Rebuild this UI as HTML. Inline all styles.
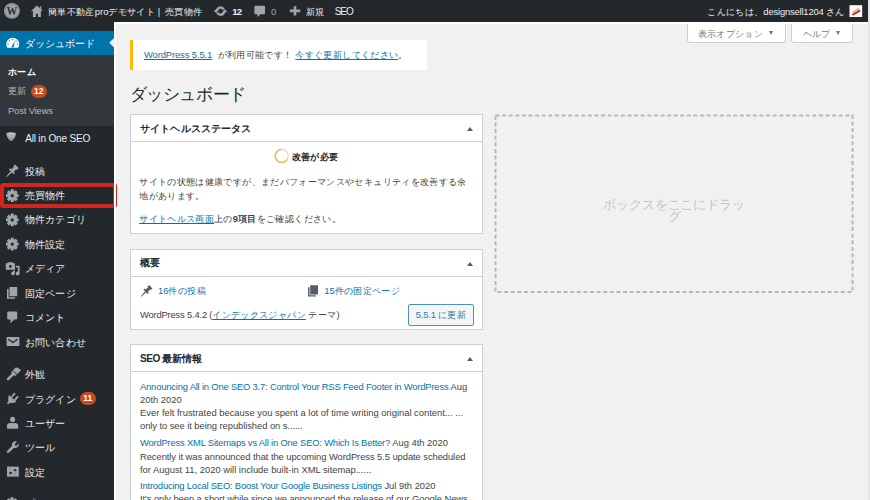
<!DOCTYPE html>
<html><head><meta charset="utf-8">
<style>
*{box-sizing:border-box;}
html,body{margin:0;padding:0;}
body{width:870px;height:500px;overflow:hidden;position:relative;background:#f1f1f1;font-family:"Liberation Sans",sans-serif;color:#444;}
.a{position:absolute;}
svg.a{overflow:visible;}
.t{position:absolute;white-space:nowrap;line-height:14px;height:14px;}
.j{font-size:calc(var(--em) / 0.75);line-height:0;}
.tofu .j{-webkit-text-stroke:0.4px currentColor;}
.tofu b .j,.tofu .bd .j{-webkit-text-stroke:0.9px currentColor;}
.lnk{color:#0073aa;}
.u{text-decoration:underline;}
.nl{letter-spacing:-0.18px;}
.box{position:absolute;background:#fff;border:1px solid #ccd0d4;}
.hd{position:absolute;left:0;right:0;top:0;height:27px;border-bottom:1px solid #ccd0d4;}
.tri{position:absolute;width:0;height:0;border-left:3px solid transparent;border-right:3px solid transparent;border-bottom:4px solid #555d66;}
.sbtn{position:absolute;top:22px;height:21px;background:#fff;border:1px solid #ccd0d4;border-top:none;border-radius:0 0 3px 3px;}
.dn{position:absolute;width:0;height:0;border-left:2.7px solid transparent;border-right:2.7px solid transparent;border-top:4.5px solid #72777c;}
.badge{position:absolute;height:12.5px;border-radius:6.5px;background:#ca4a1f;color:#fff;font-size:8.4px;font-weight:bold;line-height:12.5px;text-align:center;}
</style></head><body>

<div class="a" style="left:0;top:0;width:868px;height:22px;background:#23282d;"></div>
<div class="a" style="left:868px;top:0;width:2px;height:500px;background:#e6e6e6;"></div>
<div class="sbtn" style="left:686.5px;width:99.5px;"></div>
<div class="dn" style="left:768.5px;top:30.8px;"></div>
<div class="sbtn" style="left:790.8px;width:62.6px;"></div>
<div class="dn" style="left:835.8px;top:30.8px;"></div>
<div class="a" style="left:0;top:22px;width:114px;height:478px;background:#23282d;"></div>
<div class="a" style="left:0;top:31px;width:114px;height:24px;background:#0073aa;"></div>
<div class="a" style="left:0;top:55px;width:114px;height:71px;background:#32373c;"></div>
<div class="a" style="left:0;top:183px;width:117px;height:25.3px;border:4px solid #d0271d;border-radius:3px;"></div>
<div class="badge" style="left:31px;top:85px;width:15.5px;">12</div>
<div class="badge" style="left:79.5px;top:392px;width:16.5px;">11</div>
<div class="a" style="left:114px;top:22px;width:1.5px;height:478px;background:#fff;"></div>
<div class="a" style="left:114px;top:22px;width:754px;height:1.5px;background:#fff;"></div>
<svg class="a" style="left:109px;top:37.3px" width="6" height="11.4" viewBox="0 0 6 11.4"><path d="M6 0 L0.2 5.7 L6 11.4z" fill="#f1f1f1"/></svg>

<div class="a" style="left:130px;top:40.3px;width:297px;height:29.4px;background:#fff;border-left:3px solid #ffb900;"></div>

<div class="box" style="left:130px;top:114.3px;width:353px;height:120.2px;"><div class="hd" style="height:26.5px;"></div></div>
<div class="tri" style="left:466.5px;top:126.6px;"></div>
<svg class="a" style="left:0;top:0" width="1" height="1" viewBox="0 0 1 1"><circle cx="281.75" cy="155.8" r="6.5" fill="none" stroke="#dcdcde" stroke-width="1.3"/><path d="M281.75 149.3 A6.5 6.5 0 1 0 287.38 159.05" fill="none" stroke="#f0b849" stroke-width="1.3"/></svg>

<div class="box" style="left:130px;top:249.3px;width:353px;height:81px;"><div class="hd" style="height:26.5px;"></div></div>
<div class="tri" style="left:466.5px;top:261.6px;"></div>
<svg class="a" style="left:0;top:0" width="1" height="1" viewBox="0 0 1 1"><path fill="#555d66" d="M149.10 285.09 L152.41 288.40 L150.75 290.05 L147.45 286.75Z M148.02 287.32 L150.18 289.48 L147.89 291.77 L145.73 289.61Z M144.65 288.53 L148.97 292.85 L147.83 294.00 L143.50 289.67Z M145.15 291.33 L146.17 292.35 L141.30 296.64 L140.86 296.20Z"/><path fill="#555d66" d="M310.2 285.3 H318 V294.4 H310.2Z M308 287.2 H309.5 V295.2 H315.8 V296.4 H308Z"/></svg>
<div class="a" style="left:408px;top:304.3px;width:65.6px;height:21.4px;background:#f3f5f6;border:1px solid #4a94c0;border-radius:2px;"></div>

<div class="box" style="left:130px;top:344.3px;width:353px;height:170px;"><div class="hd" style="height:26.5px;"></div></div>
<div class="tri" style="left:466.5px;top:356.6px;"></div>

<svg class="a" style="left:0;top:0" width="1" height="1" viewBox="0 0 1 1"><rect x="495.5" y="115.5" width="357" height="176.5" fill="none" stroke="#b4b9be" stroke-width="2" stroke-dasharray="4 2.6"/></svg>

<svg class="a" style="left:0;top:0" width="870" height="22" viewBox="0 0 870 22"><circle cx="11.9" cy="10.9" r="7.9" fill="#9ea3a8"/><circle cx="11.9" cy="10.9" r="6.9" fill="none" stroke="#6f7479" stroke-width="0.45"/><text transform="translate(11.8,15.1) scale(0.9,1)" text-anchor="middle" font-family="Liberation Serif" font-weight="bold" font-size="12" fill="#2a2f34">W</text><path fill="#a0a5aa" d="M36.9 5.5 L39.8 8.2 V6.6 H41.3 V9.6 L42.6 10.9 L41.9 11.6 L40.9 10.7 V17 H37.9 V13.7 H35.9 V17 H32.9 V10.7 L31.9 11.6 L31.2 10.9Z"/><path fill="none" stroke="#a0a5aa" stroke-width="2.5" d="M217.00 10.55 A3.5 3.5 0 0 1 223.60 9.55 M224.00 11.75 A3.5 3.5 0 0 1 217.40 12.75"/><path fill="#a0a5aa" d="M213.6 10.0 H218.6 L216.1 13.2Z M222.4 12.3 H227.4 L224.9 9.1Z"/><path fill="#a0a5aa" d="M255.2 5.7 H264.2 Q265 5.7 265 6.5 V13.4 Q265 14.2 264.2 14.2 H260.4 L257.4 17.2 V14.2 H255.2 Q254.4 14.2 254.4 13.4 V6.5 Q254.4 5.7 255.2 5.7Z"/><path fill="#a0a5aa" d="M293.7 6.3 H296.3 V9.6 H300.2 V12.2 H296.3 V15.5 H293.7 V12.2 H289.8 V9.6 H293.7Z"/><rect x="849.5" y="5.2" width="12.7" height="11.8" fill="#fff"/><path fill="#c1185a" d="M851.6 14.6 L859.9 9.6 L860.3 11.6 L853.2 15.6Z"/><path fill="#efb23c" d="M852.6 12.2 L857.8 8.0 L859.9 9.6 L851.6 14.6Z"/></svg>

<svg class="a" style="left:0;top:0" width="114" height="500" viewBox="0 0 114 500"><path fill="#fff" d="M7.40 47.8 A6.45 6.45 0 1 1 18.10 47.8Z"/><circle cx="8.05" cy="44.20" r="0.65" fill="#0073aa"/><circle cx="9.43" cy="40.88" r="0.65" fill="#0073aa"/><circle cx="12.75" cy="39.50" r="0.65" fill="#0073aa"/><circle cx="16.07" cy="40.88" r="0.65" fill="#0073aa"/><circle cx="17.45" cy="44.20" r="0.65" fill="#0073aa"/><path fill="#0073aa" d="M11.85 46.60 L14.95 40.60 L13.65 46.60Z"/><circle cx="12.75" cy="46.6" r="1" fill="#0073aa"/><defs><linearGradient id="sg" x1="0" y1="0" x2="0" y2="1"><stop offset="0" stop-color="#c4c7ca"/><stop offset="1" stop-color="#8a8f94"/></linearGradient></defs><path fill="url(#sg)" d="M6.5 133.1 Q11.15 131.3 15.8 133.1 Q15.7 138.7 11.15 141.3 Q6.6 138.7 6.5 133.1Z"/><path fill="#a0a5aa" d="M15.09 164.40 L18.76 168.07 L16.93 169.91 L13.25 166.23Z M13.88 166.87 L16.29 169.28 L13.74 171.82 L11.34 169.42Z M10.14 168.21 L14.95 173.02 L13.67 174.30 L8.86 169.49Z M10.70 171.33 L11.83 172.46 L6.42 177.23 L5.93 176.74Z"/><path fill="#a0a5aa" fill-rule="evenodd" d="M16.70 194.04 L18.64 194.28 L18.64 197.12 L16.70 197.36 L16.58 197.64 L17.79 199.18 L15.78 201.19 L14.24 199.98 L13.96 200.10 L13.72 202.04 L10.88 202.04 L10.64 200.10 L10.36 199.98 L8.82 201.19 L6.81 199.18 L8.02 197.64 L7.90 197.36 L5.96 197.12 L5.96 194.28 L7.90 194.04 L8.02 193.76 L6.81 192.22 L8.82 190.21 L10.36 191.42 L10.64 191.30 L10.88 189.36 L13.72 189.36 L13.96 191.30 L14.24 191.42 L15.78 190.21 L17.79 192.22 L16.58 193.76Z M13.90 195.7 a1.6 1.6 0 1 0 -3.2 0 a1.6 1.6 0 1 0 3.2 0Z"/><path fill="#a0a5aa" fill-rule="evenodd" d="M16.70 218.29 L18.64 218.53 L18.64 221.37 L16.70 221.61 L16.58 221.89 L17.79 223.43 L15.78 225.44 L14.24 224.23 L13.96 224.35 L13.72 226.29 L10.88 226.29 L10.64 224.35 L10.36 224.23 L8.82 225.44 L6.81 223.43 L8.02 221.89 L7.90 221.61 L5.96 221.37 L5.96 218.53 L7.90 218.29 L8.02 218.01 L6.81 216.47 L8.82 214.46 L10.36 215.67 L10.64 215.55 L10.88 213.61 L13.72 213.61 L13.96 215.55 L14.24 215.67 L15.78 214.46 L17.79 216.47 L16.58 218.01Z M13.90 219.95 a1.6 1.6 0 1 0 -3.2 0 a1.6 1.6 0 1 0 3.2 0Z"/><path fill="#a0a5aa" fill-rule="evenodd" d="M16.70 242.49 L18.64 242.73 L18.64 245.57 L16.70 245.81 L16.58 246.09 L17.79 247.63 L15.78 249.64 L14.24 248.43 L13.96 248.55 L13.72 250.49 L10.88 250.49 L10.64 248.55 L10.36 248.43 L8.82 249.64 L6.81 247.63 L8.02 246.09 L7.90 245.81 L5.96 245.57 L5.96 242.73 L7.90 242.49 L8.02 242.21 L6.81 240.67 L8.82 238.66 L10.36 239.87 L10.64 239.75 L10.88 237.81 L13.72 237.81 L13.96 239.75 L14.24 239.87 L15.78 238.66 L17.79 240.67 L16.58 242.21Z M13.90 244.15 a1.6 1.6 0 1 0 -3.2 0 a1.6 1.6 0 1 0 3.2 0Z"/><path fill="#a0a5aa" fill-rule="evenodd" d="M5.8 263.3 H7.5 L8.1 262.2 H12.7 L13.3 263.3 H15 V269.8 H5.8Z M11.8 266.4 a1.4 1.4 0 1 0 -2.8 0 a1.4 1.4 0 1 0 2.8 0Z"/><path fill="#a0a5aa" d="M15.8 265.8 H19.6 V273.4 A1.9 1.9 0 1 1 17.9 271.6 V267.6 H15.8Z"/><path fill="#a0a5aa" d="M14.9 270.6 V273.3 A1.9 1.9 0 1 1 13.1 271.5 V270.6Z"/><path fill="#a0a5aa" d="M9.4 287 H17.2 V296.2 H9.4Z M7 289 H8.6 V297.2 H15 V298.8 H7Z"/><path fill="#a0a5aa" d="M8 311.6 H16.4 Q17.2 311.6 17.2 312.4 V318.6 Q17.2 319.4 16.4 319.4 H14.4 L10.2 323.2 L10.7 319.4 H8 Q7.2 319.4 7.2 318.6 V312.4 Q7.2 311.6 8 311.6Z"/><path fill="#a0a5aa" d="M7.2 337 H18.8 Q19.4 337 19.4 337.6 V345.4 Q19.4 346 18.8 346 H7.2 Q6.6 346 6.6 345.4 V337.6 Q6.6 337 7.2 337Z"/><path fill="none" stroke="#23282d" stroke-width="1.2" d="M8.2 339.2 L12.9 342.6 L17.6 339.2"/><path fill="#a0a5aa" d="M15.72 367.38 L17.92 367.87 L21.10 370.20 L17.00 374.31 L12.89 370.20Z M12.47 370.63 L16.57 374.73 L15.30 376.00 L11.20 371.90Z M12.12 372.82 L14.38 375.08 L13.39 376.07 L11.13 373.81Z"/><path stroke="#a0a5aa" stroke-width="2.6" stroke-linecap="round" d="M12.40 374.80 L8.02 379.18"/><path fill="#a0a5aa" d="M8.9 395.0 L16.6 401.8 Q13.4 403.6 9.8 402.8 L8.1 404.4 L6.9 403.2 L8.4 401.5 Q7.7 398.2 8.9 395.0Z"/><path stroke="#a0a5aa" stroke-width="1.9" stroke-linecap="round" d="M12.1 396.4 L14.5 393.8 M15.3 399.5 L17.6 396.9"/><ellipse cx="12.6" cy="419.4" rx="2.5" ry="2.7" fill="#a0a5aa"/><path fill="#a0a5aa" d="M7 428.8 V425.8 Q7 423 10.2 423 H15 Q18.2 423 18.2 425.8 V428.8Z"/><path fill="#a0a5aa" d="M18.8 443.6 L16.6 445.8 L15.0 445.6 L14.8 444.0 L17.0 441.8 Q14.6 440.6 12.8 442.4 Q11.4 443.9 12.0 445.9 L7.0 450.9 Q6.2 452.0 7.1 452.8 Q8.0 453.6 9.0 452.8 L14.0 447.8 Q16.0 448.5 17.6 447.1 Q19.4 445.4 18.8 443.6Z"/><circle cx="8.1" cy="451.8" r="0.55" fill="#23282d"/><rect x="7" y="466.6" width="11.8" height="10" fill="#a0a5aa"/><path stroke="#868b90" stroke-width="0.9" d="M10.6 468.2 V475.2 M15 468.2 V475.2"/><ellipse cx="10.6" cy="473" rx="1.5" ry="0.9" fill="#23282d"/><ellipse cx="15" cy="470.2" rx="1.5" ry="0.9" fill="#23282d"/><path fill="#a0a5aa" fill-rule="evenodd" d="M16.31 501.88 L18.15 502.13 L18.15 504.87 L16.31 505.12 L16.19 505.40 L17.32 506.88 L15.38 508.82 L13.90 507.69 L13.62 507.81 L13.37 509.65 L10.63 509.65 L10.38 507.81 L10.10 507.69 L8.62 508.82 L6.68 506.88 L7.81 505.40 L7.69 505.12 L5.85 504.87 L5.85 502.13 L7.69 501.88 L7.81 501.60 L6.68 500.12 L8.62 498.18 L10.10 499.31 L10.38 499.19 L10.63 497.35 L13.37 497.35 L13.62 499.19 L13.90 499.31 L15.38 498.18 L17.32 500.12 L16.19 501.60Z M13.60 503.5 a1.6 1.6 0 1 0 -3.2 0 a1.6 1.6 0 1 0 3.2 0Z"/></svg>

<div class="t" style="left:48.00px;top:4.74px;font-size:9.4px;--em:9.36px;color:#eee;"><span class="j">簡単不動産</span>pro<span class="j">デモサイト</span> | </div>
<div class="t" style="left:165.00px;top:4.74px;font-size:9.4px;--em:9.36px;color:#eee;"><span class="j">売買物件</span></div>
<div class="t bd" style="left:232.30px;top:4.67px;font-size:9.6px;--em:9.36px;color:#eee;font-weight:bold;letter-spacing:-0.8px;">12</div>
<div class="t" style="left:271.00px;top:4.67px;font-size:9.6px;--em:9.36px;color:#a0a5aa;">0</div>
<div class="t" style="left:305.50px;top:4.74px;font-size:9.4px;--em:9.36px;color:#eee;"><span class="j">新規</span></div>
<div class="t" style="left:334.80px;top:4.53px;font-size:10.0px;--em:9.36px;color:#eee;letter-spacing:-1.1px;">SEO</div>
<div class="t" style="left:707.20px;top:4.74px;font-size:9.4px;--em:9.36px;color:#eee;letter-spacing:-0.17px;"><span class="j">こんにちは、</span>designsell1204 <span class="j">さん</span></div>
<div class="t" style="left:697.50px;top:26.74px;font-size:9.4px;--em:9.36px;color:#72777c;"><span class="j">表示オプション</span></div>
<div class="t" style="left:802.70px;top:26.74px;font-size:9.4px;--em:9.36px;color:#72777c;"><span class="j">ヘルプ</span></div>
<div class="t" style="left:25.00px;top:36.50px;font-size:10.1px;--em:10.08px;color:#fff;"><span class="j">ダッシュボード</span></div>
<div class="t bd" style="left:8.00px;top:64.74px;font-size:9.4px;--em:9.36px;color:#fff;font-weight:bold;"><span class="j">ホーム</span></div>
<div class="t" style="left:8.00px;top:84.24px;font-size:9.4px;--em:9.36px;color:#b4b9be;"><span class="j">更新</span></div>
<div class="t" style="left:8.00px;top:103.94px;font-size:9.4px;--em:9.36px;color:#b4b9be;letter-spacing:-0.13px;">Post Views</div>
<div class="t" style="left:25.20px;top:131.80px;font-size:10.1px;--em:10.08px;color:#eee;letter-spacing:-0.21px;">All in One SEO</div>
<div class="t" style="left:25.20px;top:164.50px;font-size:10.1px;--em:10.08px;color:#eee;"><span class="j">投稿</span></div>
<div class="t" style="left:25.20px;top:188.90px;font-size:10.1px;--em:10.08px;color:#eee;"><span class="j">売買物件</span></div>
<div class="t" style="left:25.20px;top:213.30px;font-size:10.1px;--em:10.08px;color:#eee;"><span class="j">物件カテゴリ</span></div>
<div class="t" style="left:25.20px;top:237.70px;font-size:10.1px;--em:10.08px;color:#eee;"><span class="j">物件設定</span></div>
<div class="t" style="left:25.20px;top:262.10px;font-size:10.1px;--em:10.08px;color:#eee;"><span class="j">メディア</span></div>
<div class="t" style="left:25.20px;top:286.60px;font-size:10.1px;--em:10.08px;color:#eee;"><span class="j">固定ページ</span></div>
<div class="t" style="left:25.20px;top:311.00px;font-size:10.1px;--em:10.08px;color:#eee;"><span class="j">コメント</span></div>
<div class="t" style="left:25.20px;top:335.50px;font-size:10.1px;--em:10.08px;color:#eee;"><span class="j">お問い合わせ</span></div>
<div class="t" style="left:25.20px;top:368.10px;font-size:10.1px;--em:10.08px;color:#eee;"><span class="j">外観</span></div>
<div class="t" style="left:25.20px;top:392.50px;font-size:10.1px;--em:10.08px;color:#eee;"><span class="j">プラグイン</span></div>
<div class="t" style="left:25.20px;top:416.90px;font-size:10.1px;--em:10.08px;color:#eee;"><span class="j">ユーザー</span></div>
<div class="t" style="left:25.20px;top:441.30px;font-size:10.1px;--em:10.08px;color:#eee;"><span class="j">ツール</span></div>
<div class="t" style="left:25.20px;top:465.70px;font-size:10.1px;--em:10.08px;color:#eee;"><span class="j">設定</span></div>
<div class="t" style="left:25.20px;top:497.00px;font-size:10.1px;--em:10.08px;color:#eee;"><span class="j">プロフィール</span></div>
<div class="t" style="left:144.00px;top:48.24px;font-size:9.4px;--em:9.36px;letter-spacing:-0.1px;"><span class="lnk u">WordPress 5.5.1</span></div>
<div class="t" style="left:217.60px;top:48.24px;font-size:9.4px;--em:9.36px;"><span class="j">が利用可能です！</span></div>
<div class="t" style="left:295.40px;top:48.24px;font-size:9.4px;--em:9.36px;"><span class="lnk u"><span class="j">今すぐ更新してください</span></span><span class="j">。</span></div>
<div class="t" style="left:129.80px;top:88.24px;font-size:16.6px;--em:16.56px;color:#23282d;"><span class="j">ダッシュボード</span></div>
<div class="t bd" style="left:140.20px;top:121.50px;font-size:10.1px;--em:10.08px;color:#23282d;font-weight:bold;"><span class="j">サイトヘルスステータス</span></div>
<div class="t bd" style="left:291.60px;top:149.74px;font-size:9.4px;--em:9.36px;color:#23282d;font-weight:bold;"><span class="j">改善が必要</span></div>
<div class="t" style="left:139.20px;top:175.24px;font-size:9.4px;--em:9.36px;"><span class="j">サイトの状態は健康ですが、まだパフォーマンスやセキュリティを改善する余</span></div>
<div class="t" style="left:139.20px;top:189.24px;font-size:9.4px;--em:9.36px;"><span class="j">地があります。</span></div>
<div class="t" style="left:139.20px;top:211.54px;font-size:9.4px;--em:9.36px;"><span class="lnk u"><span class="j">サイトヘルス画面</span></span><span class="j">上の</span><b>9<span class="j">項目</span></b><span class="j">をご確認ください。</span></div>
<div class="t bd" style="left:139.60px;top:256.00px;font-size:10.1px;--em:10.08px;color:#23282d;font-weight:bold;"><span class="j">概要</span></div>
<div class="t lnk" style="left:158.00px;top:283.74px;font-size:9.4px;--em:9.36px;">16<span class="j">件の投稿</span></div>
<div class="t lnk" style="left:324.20px;top:283.74px;font-size:9.4px;--em:9.36px;">15<span class="j">件の固定ページ</span></div>
<div class="t" style="left:140.00px;top:308.44px;font-size:9.4px;--em:9.36px;letter-spacing:-0.18px;">WordPress 5.4.2 (<span class="lnk u"><span class="j">インデックスジャパン</span></span> <span class="j">テーマ</span>)</div>
<div class="t" style="left:415.80px;top:308.44px;font-size:9.4px;--em:9.36px;color:#2a7aab;letter-spacing:-0.2px;">5.5.1 <span class="j">に更新</span></div>
<div class="t bd" style="left:140.00px;top:352.00px;font-size:10.1px;--em:10.08px;color:#23282d;font-weight:bold;letter-spacing:-0.5px;">SEO <span class="j">最新情報</span></div>
<div class="t" style="left:140.00px;top:380.44px;font-size:9.4px;--em:9.36px;"><span class="lnk nl">Announcing All in One SEO 3.7: Control Your RSS Feed Footer in WordPress</span> Aug</div>
<div class="t" style="left:140.00px;top:393.44px;font-size:9.4px;--em:9.36px;">20th 2020</div>
<div class="t" style="left:140.00px;top:406.44px;font-size:9.4px;--em:9.36px;">Ever felt frustrated because you spent a lot of time writing original content... ...</div>
<div class="t" style="left:140.00px;top:419.44px;font-size:9.4px;--em:9.36px;"><span style="letter-spacing:-0.06px">only to see it being republished on s......</span></div>
<div class="t" style="left:140.00px;top:436.04px;font-size:9.4px;--em:9.36px;"><span class="lnk nl">WordPress XML Sitemaps vs All in One SEO: Which Is Better?</span> Aug 4th 2020</div>
<div class="t" style="left:140.00px;top:449.54px;font-size:9.4px;--em:9.36px;"><span style="letter-spacing:-0.065px">Recently it was announced that the upcoming WordPress 5.5 update scheduled</span></div>
<div class="t" style="left:140.00px;top:462.94px;font-size:9.4px;--em:9.36px;">for August 11, 2020 will include built-in XML sitemap......</div>
<div class="t" style="left:140.00px;top:479.34px;font-size:9.4px;--em:9.36px;"><span class="lnk nl">Introducing Local SEO: Boost Your Google Business Listings</span> Jul 9th 2020</div>
<div class="t" style="left:140.00px;top:491.94px;font-size:9.4px;--em:9.36px;"><span style="letter-spacing:-0.065px">It's only been a short while since we announced the release of our Google News</span></div>
<div class="t" style="left:594.00px;top:197.99px;font-size:13.0px;--em:12.96px;color:#c3c4c7;width:160px;text-align:center;"><span class="j">ボックスをここにドラッ</span></div>
<div class="t" style="left:594.00px;top:210.49px;font-size:13.0px;--em:12.96px;color:#c3c4c7;width:160px;text-align:center;"><span class="j">グ</span></div>

<script>
(function(){
  var sp=document.querySelectorAll('.j');
  for(var i=0;i<sp.length;i++){
    var s=sp[i];
    var em=parseFloat(getComputedStyle(s).getPropertyValue('--em'));
    if(!em) continue;
    var n=s.textContent.length;
    s.style.letterSpacing='0px';
    s.style.fontSize=em+'px';
    var w=s.getBoundingClientRect().width;
    if(w/n<0.85*em){
      document.documentElement.classList.add('tofu');
      s.style.fontSize=(em/0.75)+'px';
      w=s.getBoundingClientRect().width;
    }
    s.style.letterSpacing=((n*em-w)/n)+'px';
  }
})();
</script>
</body></html>
